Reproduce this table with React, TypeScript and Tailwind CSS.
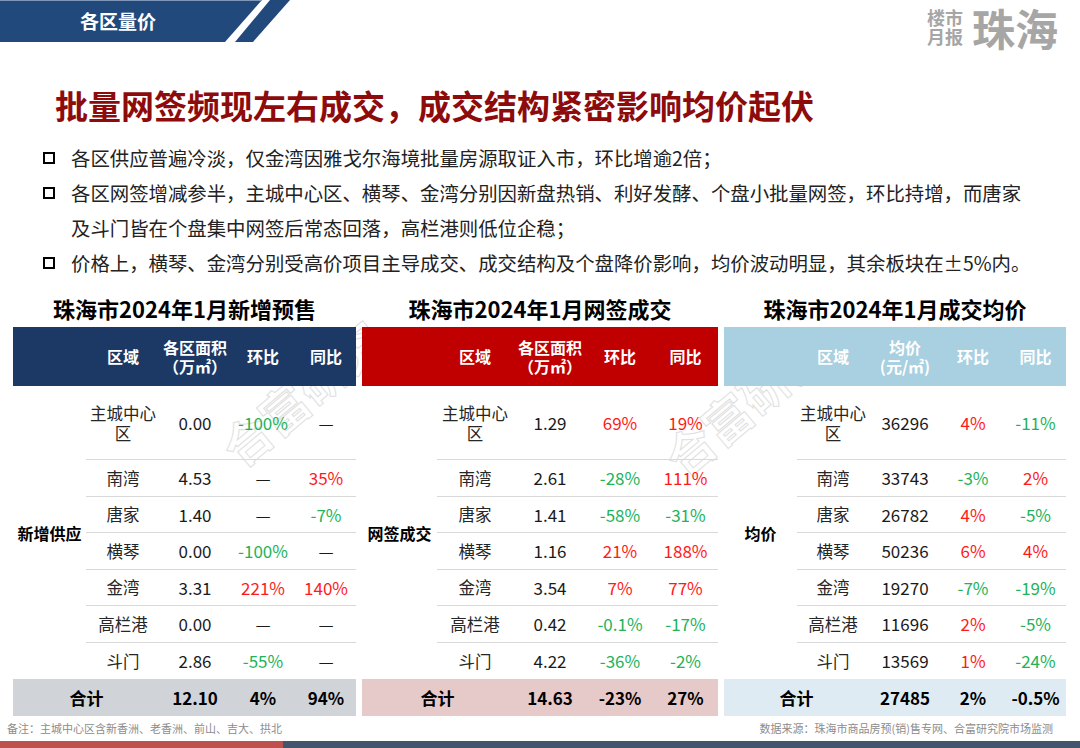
import React from 'react';

type Row = [string, string, string, string];

interface TableProps {
  title: string;
  label: string;
  headerBg: string;
  headerText: React.ReactNode;
  totalBg: string;
  width: string;
  headCols: string;
  totalCols: string;
  bodyCols: string;
  labelW: string;
  rows: Row[];
  total: [string, string, string];
}

const valueColor = (v: string) => {
  if (v === '—') return 'text-[#1a1a1a]';
  if (v.startsWith('-')) return 'text-[#22b35a]';
  if (v.endsWith('%')) return 'text-[#ff1a1a]';
  return 'text-[#1a1a1a]';
};

const DataTable: React.FC<TableProps> = ({
  title,
  label,
  headerBg,
  headerText,
  totalBg,
  width,
  headCols,
  totalCols,
  bodyCols,
  labelW,
  rows,
  total,
}) => {
  return (
    <div className={`${width} relative flex flex-col`}>
      <div className="h-[28px] leading-[28px] text-center text-[22px] font-bold text-black mb-[5px]">{title}</div>

      {/* header */}
      <div className={`grid ${headCols} h-[59px] items-center ${headerBg} text-white font-bold text-[16px] leading-[19px] text-center`}>
        <div />
        <div>区域</div>
        <div>{headerText}</div>
        <div>环比</div>
        <div>同比</div>
      </div>

      {/* body */}
      <div className="flex">
        <div className={`${labelW} flex items-center justify-center text-[16px] font-bold text-black`}>{label}</div>
        <div className="flex-1">
          {rows.map((r, i) => (
            <div
              key={r[0]}
              className={`grid ${bodyCols} items-center text-center text-[16.5px] ${
                i === 0 ? 'h-[74px]' : 'h-[36.5px]'
              } ${i < rows.length - 1 ? 'border-b-[1.5px] border-[#d9d9d9]' : ''}`}
            >
              <div className="leading-[20px] text-[#262626]">{r[0]}</div>
              <div className="text-[17px] text-[#1a1a1a]">{r[1]}</div>
              <div className={`text-[17px] ${valueColor(r[2])}`}>{r[2]}</div>
              <div className={`text-[17px] ${valueColor(r[3])}`}>{r[3]}</div>
            </div>
          ))}
        </div>
      </div>

      {/* total */}
      <div className={`grid ${totalCols} h-[37px] items-center ${totalBg} text-center font-bold text-[17px] text-black`}>
        <div>合计</div>
        <div>{total[0]}</div>
        <div>{total[1]}</div>
        <div>{total[2]}</div>
      </div>
    </div>
  );
};

const Bullet: React.FC<{ children: React.ReactNode }> = ({ children }) => (
  <div className="flex items-start">
    <div className="w-[28px] h-[35px] flex items-center">
      <span className="block w-[12px] h-[12px] border-[2.5px] border-black" />
    </div>
    <div className="w-[965px]">{children}</div>
  </div>
);

const Watermark: React.FC<{ pos: string }> = ({ pos }) => (
  <span
    className={`absolute ${pos} rotate-[-40deg] text-[48px] font-bold leading-[60px] whitespace-nowrap text-transparent [-webkit-text-stroke:1px_#e0e0e0] select-none pointer-events-none`}
  >
    合富研究
  </span>
);

const App: React.FC = () => {
  const t1: Row[] = [
    ['主城中心区', '0.00', '-100%', '—'],
    ['南湾', '4.53', '—', '35%'],
    ['唐家', '1.40', '—', '-7%'],
    ['横琴', '0.00', '-100%', '—'],
    ['金湾', '3.31', '221%', '140%'],
    ['高栏港', '0.00', '—', '—'],
    ['斗门', '2.86', '-55%', '—'],
  ];
  const t2: Row[] = [
    ['主城中心区', '1.29', '69%', '19%'],
    ['南湾', '2.61', '-28%', '111%'],
    ['唐家', '1.41', '-58%', '-31%'],
    ['横琴', '1.16', '21%', '188%'],
    ['金湾', '3.54', '7%', '77%'],
    ['高栏港', '0.42', '-0.1%', '-17%'],
    ['斗门', '4.22', '-36%', '-2%'],
  ];
  const t3: Row[] = [
    ['主城中心区', '36296', '4%', '-11%'],
    ['南湾', '33743', '-3%', '2%'],
    ['唐家', '26782', '4%', '-5%'],
    ['横琴', '50236', '6%', '4%'],
    ['金湾', '19270', '-7%', '-19%'],
    ['高栏港', '11696', '2%', '-5%'],
    ['斗门', '13569', '1%', '-24%'],
  ];

  return (
    <div className="w-[1080px] h-[748px] overflow-hidden bg-white flex flex-col font-['Noto_Sans_CJK_SC','Noto_Sans',sans-serif]">
      {/* top bar */}
      <div className="h-[52px] flex items-start justify-between pr-[22px]">
        <div className="flex h-[42px]">
          <div className="w-[262px] h-[42px] bg-[#21497c] border-t border-[#7f98ba] [clip-path:polygon(0_0,262px_0,225px_100%,0_100%)] flex items-center pl-[80px] text-white font-bold text-[19px]">
            各区量价
          </div>
          <div className="w-[55px] h-[42px] -ml-[27px] bg-[#21497c] [clip-path:polygon(35px_0,55px_0,18px_100%,0_100%)]" />
        </div>
        <div className="flex items-center gap-[9px] pt-[4px] text-[#a6a6a6] font-bold">
          <div className="text-[18px] leading-[19px] flex flex-col">
            <span>楼市</span>
            <span>月报</span>
          </div>
          <div className="text-[43px] leading-[46px]">珠海</div>
        </div>
      </div>

      {/* title */}
      <div className="mt-[33px] h-[40px] leading-[40px] pl-[55px] text-[33px] font-bold text-[#8e0b0b]">
        批量网签频现左右成交，成交结构紧密影响均价起伏
      </div>

      {/* bullets */}
      <div className="mt-[15px] pl-[43px] text-[19.4px] leading-[35px] text-[#222]">
        <Bullet>各区供应普遍冷淡，仅金湾因雅戈尔海境批量房源取证入市，环比增逾2倍；</Bullet>
        <Bullet>
          各区网签增减参半，主城中心区、横琴、金湾分别因新盘热销、利好发酵、个盘小批量网签，环比持增，而唐家及斗门皆在个盘集中网签后常态回落，高栏港则低位企稳；
        </Bullet>
        <Bullet>价格上，横琴、金湾分别受高价项目主导成交、成交结构及个盘降价影响，均价波动明显，其余板块在±5%内。</Bullet>
      </div>

      {/* tables */}
      <div className="relative mt-[14px] flex gap-[6px] pl-[13px]">
        <Watermark pos="left-[205px] top-[68px]" />
        <Watermark pos="left-[648px] top-[78px]" />
        <DataTable
          title="珠海市2024年1月新增预售"
          label="新增供应"
          headerBg="bg-[#1c3864]"
          headerText={
            <>
              各区面积
              <br />
              （万㎡）
            </>
          }
          totalBg="bg-[#d0d3d8]"
          width="w-[343px]"
          headCols="grid-cols-[73px_74px_70px_66px_60px]"
          totalCols="grid-cols-[147px_70px_66px_60px]"
          bodyCols="grid-cols-[74px_70px_66px_60px]"
          labelW="w-[73px]"
          rows={t1}
          total={['12.10', '4%', '94%']}
        />
        <DataTable
          title="珠海市2024年1月网签成交"
          label="网签成交"
          headerBg="bg-[#c00000]"
          headerText={
            <>
              各区面积
              <br />
              （万㎡）
            </>
          }
          totalBg="bg-[#e6c9c9]"
          width="w-[356px]"
          headCols="grid-cols-[75px_76px_74px_66px_65px]"
          totalCols="grid-cols-[151px_74px_66px_65px]"
          bodyCols="grid-cols-[76px_74px_66px_65px]"
          labelW="w-[75px]"
          rows={t2}
          total={['14.63', '-23%', '27%']}
        />
        <DataTable
          title="珠海市2024年1月成交均价"
          label="均价"
          headerBg="bg-[#a8d0e0]"
          headerText={
            <>
              均价
              <br />
              (元/㎡)
            </>
          }
          totalBg="bg-[#deebf2]"
          width="w-[342px]"
          headCols="grid-cols-[73px_72px_72px_64px_61px]"
          totalCols="grid-cols-[145px_72px_64px_61px]"
          bodyCols="grid-cols-[72px_72px_64px_61px]"
          labelW="w-[73px]"
          rows={t3}
          total={['27485', '2%', '-0.5%']}
        />
      </div>

      {/* footer */}
      <div className="h-[25px] flex items-center justify-between px-[7px] pr-[27px] text-[11px] text-[#8c8c8c]">
        <span>备注：主城中心区含新香洲、老香洲、前山、吉大、拱北</span>
        <span>数据来源：珠海市商品房预(销)售专网、合富研究院市场监测</span>
      </div>
      <div className="h-[7px] flex">
        <div className="w-[283px] bg-[#c0504d]" />
        <div className="flex-1 bg-[#44546a]" />
      </div>
    </div>
  );
};

export default App;
